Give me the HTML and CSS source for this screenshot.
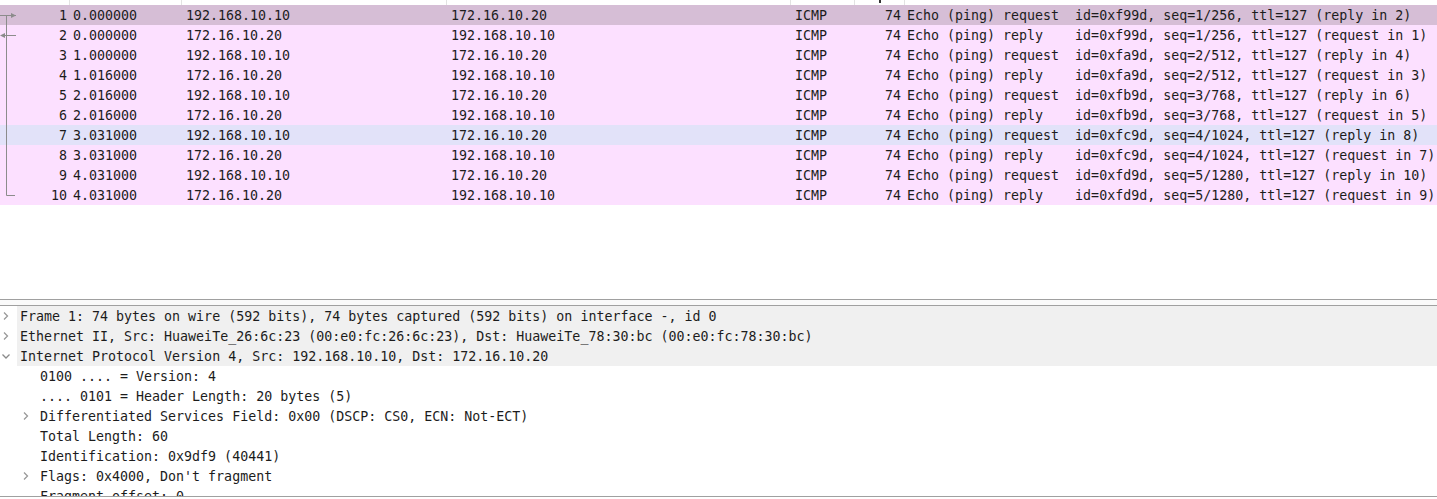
FILE: index.html
```html
<!DOCTYPE html>
<html>
<head>
<meta charset="utf-8">
<link rel="stylesheet" href="styles.css">
</head>
<body>
<div class="app">
  <div class="list">
    <div class="head">
      <div class="hc"></div><div class="hc"></div><div class="hc"></div><div class="hc"></div><div class="hc"></div><div class="hc hc-last"><span class="tick"></span></div><div class="hc"></div>
    </div>
    <div class="rows">
      <div class="row sel"><span class="c no">1</span><span class="c">0.000000</span><span class="c">192.168.10.10</span><span class="c">172.16.10.20</span><span class="c">ICMP</span><span class="c len">74</span><span class="c info">Echo (ping) request  id=0xf99d, seq=1/256, ttl=127 (reply in 2)</span></div>
      <div class="row"><span class="c no">2</span><span class="c">0.000000</span><span class="c">172.16.10.20</span><span class="c">192.168.10.10</span><span class="c">ICMP</span><span class="c len">74</span><span class="c info">Echo (ping) reply    id=0xf99d, seq=1/256, ttl=127 (request in 1)</span></div>
      <div class="row"><span class="c no">3</span><span class="c">1.000000</span><span class="c">192.168.10.10</span><span class="c">172.16.10.20</span><span class="c">ICMP</span><span class="c len">74</span><span class="c info">Echo (ping) request  id=0xfa9d, seq=2/512, ttl=127 (reply in 4)</span></div>
      <div class="row"><span class="c no">4</span><span class="c">1.016000</span><span class="c">172.16.10.20</span><span class="c">192.168.10.10</span><span class="c">ICMP</span><span class="c len">74</span><span class="c info">Echo (ping) reply    id=0xfa9d, seq=2/512, ttl=127 (request in 3)</span></div>
      <div class="row"><span class="c no">5</span><span class="c">2.016000</span><span class="c">192.168.10.10</span><span class="c">172.16.10.20</span><span class="c">ICMP</span><span class="c len">74</span><span class="c info">Echo (ping) request  id=0xfb9d, seq=3/768, ttl=127 (reply in 6)</span></div>
      <div class="row"><span class="c no">6</span><span class="c">2.016000</span><span class="c">172.16.10.20</span><span class="c">192.168.10.10</span><span class="c">ICMP</span><span class="c len">74</span><span class="c info">Echo (ping) reply    id=0xfb9d, seq=3/768, ttl=127 (request in 5)</span></div>
      <div class="row hov"><span class="c no">7</span><span class="c">3.031000</span><span class="c">192.168.10.10</span><span class="c">172.16.10.20</span><span class="c">ICMP</span><span class="c len">74</span><span class="c info">Echo (ping) request  id=0xfc9d, seq=4/1024, ttl=127 (reply in 8)</span></div>
      <div class="row"><span class="c no">8</span><span class="c">3.031000</span><span class="c">172.16.10.20</span><span class="c">192.168.10.10</span><span class="c">ICMP</span><span class="c len">74</span><span class="c info">Echo (ping) reply    id=0xfc9d, seq=4/1024, ttl=127 (request in 7)</span></div>
      <div class="row"><span class="c no">9</span><span class="c">4.031000</span><span class="c">192.168.10.10</span><span class="c">172.16.10.20</span><span class="c">ICMP</span><span class="c len">74</span><span class="c info">Echo (ping) request  id=0xfd9d, seq=5/1280, ttl=127 (reply in 10)</span></div>
      <div class="row"><span class="c no">10</span><span class="c">4.031000</span><span class="c">172.16.10.20</span><span class="c">192.168.10.10</span><span class="c">ICMP</span><span class="c len">74</span><span class="c info">Echo (ping) reply    id=0xfd9d, seq=5/1280, ttl=127 (request in 9)</span></div>
    </div>
    <svg class="rel" width="20" height="210" viewBox="0 0 20 210">
      <g stroke="#8c8c8c" stroke-width="1" fill="none">
        <path d="M0 15.5H16"/>
        <path d="M6.5 15.5V195.5H15"/>
        <path d="M1 35.5H16"/>
      </g>
      <path d="M16 15.5L11 13V18Z" fill="#8c8c8c"/>
      <path d="M0 35.5L5 33V38Z" fill="#8c8c8c"/>
    </svg>
  </div>
  <div class="splitter"></div>
  <div class="detail">
    <div class="drow top"><span class="chev"><svg width="10" height="10" viewBox="0 0 10 10"><path d="M3 1.5L6.5 5L3 8.5" stroke="#9a9a9a" fill="none" stroke-width="1.3"/></svg></span><span class="dtxt">Frame 1: 74 bytes on wire (592 bits), 74 bytes captured (592 bits) on interface -, id 0</span></div>
    <div class="drow top"><span class="chev"><svg width="10" height="10" viewBox="0 0 10 10"><path d="M3 1.5L6.5 5L3 8.5" stroke="#9a9a9a" fill="none" stroke-width="1.3"/></svg></span><span class="dtxt">Ethernet II, Src: HuaweiTe_26:6c:23 (00:e0:fc:26:6c:23), Dst: HuaweiTe_78:30:bc (00:e0:fc:78:30:bc)</span></div>
    <div class="drow top"><span class="chev"><svg width="10" height="10" viewBox="0 0 10 10"><path d="M1.5 3.5L5 7L8.5 3.5" stroke="#8a8a8a" fill="none" stroke-width="1.3"/></svg></span><span class="dtxt">Internet Protocol Version 4, Src: 192.168.10.10, Dst: 172.16.10.20</span></div>
    <div class="drow sub"><span class="chev"></span><span class="dtxt">0100 .... = Version: 4</span></div>
    <div class="drow sub"><span class="chev"></span><span class="dtxt">.... 0101 = Header Length: 20 bytes (5)</span></div>
    <div class="drow sub"><span class="chev"><svg width="10" height="10" viewBox="0 0 10 10"><path d="M3 1.5L6.5 5L3 8.5" stroke="#9a9a9a" fill="none" stroke-width="1.3"/></svg></span><span class="dtxt">Differentiated Services Field: 0x00 (DSCP: CS0, ECN: Not-ECT)</span></div>
    <div class="drow sub"><span class="chev"></span><span class="dtxt">Total Length: 60</span></div>
    <div class="drow sub"><span class="chev"></span><span class="dtxt">Identification: 0x9df9 (40441)</span></div>
    <div class="drow sub"><span class="chev"><svg width="10" height="10" viewBox="0 0 10 10"><path d="M3 1.5L6.5 5L3 8.5" stroke="#9a9a9a" fill="none" stroke-width="1.3"/></svg></span><span class="dtxt">Flags: 0x4000, Don't fragment</span></div>
    <div class="drow sub"><span class="chev"></span><span class="dtxt">Fragment offset: 0</span></div>
  </div>
</div>
</body>
</html>
```

FILE: styles.css
```css
html, body {
  margin: 0;
  padding: 0;
  background: #ffffff;
}
body {
  width: 1437px;
  height: 499px;
  overflow: hidden;
  font-family: "DejaVu Sans Mono", "Liberation Mono", monospace;
  font-size: 13.3px;
  color: #1c1c1c;
}
.app {
  display: flex;
  flex-direction: column;
  height: 499px;
}
.list {
  position: relative;
  height: 299px;
  flex: none;
  background: #ffffff;
}
.head {
  display: grid;
  grid-template-columns: 70px 112px 265px 344px 64px 50px 1fr;
  height: 5px;
}
.hc {
  border-right: 1px solid #e3e3e3;
  position: relative;
}
.hc:last-child {
  border-right: none;
}
.tick {
  position: absolute;
  left: 24px;
  top: 0;
  width: 2px;
  height: 3px;
  background: #333333;
}
.row {
  display: grid;
  grid-template-columns: 70px 112px 265px 344px 64px 50px 1fr;
  height: 20px;
  line-height: 21px;
  background: #fce0ff;
  white-space: pre;
}
.row.sel {
  background: #d6bed6;
}
.row.hov {
  background: #e2e2f9;
}
.c {
  padding-left: 4px;
  overflow: hidden;
}
.c.no {
  text-align: right;
  padding-left: 0;
  padding-right: 3px;
}
.row .c:nth-child(2) {
  padding-left: 3px;
}
.c.len {
  text-align: right;
  padding-left: 0;
  padding-right: 4px;
}
.c.info {
  padding-left: 2px;
}
.rel {
  position: absolute;
  left: 0;
  top: 0;
}
.splitter {
  height: 5px;
  flex: none;
  border-top: 1px solid #a0a0a0;
  border-bottom: 1px solid #a0a0a0;
  background: #fafafa;
}
.detail {
  height: 190px;
  flex: none;
  overflow: hidden;
  border-bottom: 1px solid #a0a0a0;
  background: #ffffff;
}
.drow {
  display: flex;
  height: 20px;
  line-height: 21px;
  white-space: pre;
}
.drow.sub {
  padding-left: 20px;
}
.chev {
  width: 17px;
  flex: none;
  display: flex;
  align-items: center;
  padding-left: 1px;
  box-sizing: border-box;
}
.dtxt {
  flex: 1;
  padding-left: 3px;
}
.drow.top .dtxt {
  background: #f0f0f0;
}
```
